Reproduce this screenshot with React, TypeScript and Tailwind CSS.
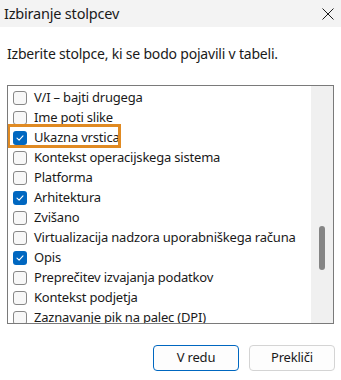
import { useState } from "react";

type Column = { id: string; label: string; checked: boolean };

const initialColumns: Column[] = [
  { id: "io-other-bytes", label: "V/I – bajti drugega", checked: false },
  { id: "image-path", label: "Ime poti slike", checked: false },
  { id: "command-line", label: "Ukazna vrstica", checked: true },
  { id: "os-context", label: "Kontekst operacijskega sistema", checked: false },
  { id: "platform", label: "Platforma", checked: false },
  { id: "architecture", label: "Arhitektura", checked: true },
  { id: "elevated", label: "Zvišano", checked: false },
  { id: "uac-virt", label: "Virtualizacija nadzora uporabniškega računa", checked: false },
  { id: "description", label: "Opis", checked: true },
  { id: "dep", label: "Preprečitev izvajanja podatkov", checked: false },
  { id: "enterprise", label: "Kontekst podjetja", checked: false },
  { id: "dpi", label: "Zaznavanje pik na palec (DPI)", checked: false },
];

function CheckBox({ checked }: { checked: boolean }) {
  if (checked) {
    return (
      <span className="flex h-[14px] w-[14px] shrink-0 items-center justify-center rounded-[3px] bg-[#0067c0]">
        <svg width="10" height="10" viewBox="0 0 10 10" fill="none">
          <path d="M2 5.2 4.1 7.2 8 2.9" stroke="white" strokeWidth="1.1" strokeLinecap="round" strokeLinejoin="round" />
        </svg>
      </span>
    );
  }
  return <span className="h-[14px] w-[14px] shrink-0 rounded-[3px] border border-[#878787] bg-[#f7f7f7]" />;
}

export default function App() {
  const [columns, setColumns] = useState(initialColumns);

  const toggle = (id: string) =>
    setColumns((cols) => cols.map((c) => (c.id === id ? { ...c, checked: !c.checked } : c)));

  return (
    <div className="h-[380px] w-[341px] overflow-hidden bg-white text-[#1a1a1a] font-['Segoe_UI','Noto_Sans',sans-serif]">
      <div className="flex h-[27px] items-center justify-between bg-[#f3f3f3] pl-[4px] pr-[7px]">
        <span className="text-[14.5px] leading-none tracking-[-0.2px]">Izbiranje stolpcev</span>
        <svg width="12" height="12" viewBox="0 0 12 12" className="text-[#1a1a1a]">
          <path d="M0.5 0.5 11.5 11.5M11.5 0.5 0.5 11.5" stroke="currentColor" strokeWidth="1" />
        </svg>
      </div>

      <div className="px-[7px] pt-[17px]">
        <p className="text-[14px] leading-[20px] tracking-[-0.2px]">Izberite stolpce, ki se bodo pojavili v tabeli.</p>

        <div className="mt-[21px] flex h-[239px] border border-[#7a7a7a]">
          <div className="flex-1 overflow-hidden pl-[5px] pt-[2px]">
            {columns.map((col) => (
              <div
                key={col.id}
                onClick={() => toggle(col.id)}
                className="relative flex h-[20px] cursor-default items-center gap-[7px] text-[13px] tracking-[-0.2px] whitespace-nowrap"
              >
                <CheckBox checked={col.checked} />
                <span>{col.label}</span>
                {col.id === "command-line" && (
                  <span className="pointer-events-none absolute left-[-6px] top-[-4px] h-[24px] w-[114px] border-[3px] border-[#e08a22]" />
                )}
              </div>
            ))}
          </div>
          <div className="flex w-[22px] justify-center bg-[#f0f0f0] pt-[140px]">
            <div className="h-[44px] w-[6px] rounded-full bg-[#858585]" />
          </div>
        </div>
      </div>

      <div className="mt-[21px] flex justify-end gap-[10px] pr-[6px]">
        <button className="h-[26px] w-[86px] rounded-[4px] border border-[#0067c0] bg-[#fdfdfd] text-[13px] tracking-[-0.2px]">V redu</button>
        <button className="h-[26px] w-[86px] rounded-[4px] border border-[#d4d4d4] bg-[#fdfdfd] text-[13px] tracking-[-0.2px]">Prekliči</button>
      </div>
    </div>
  );
}
